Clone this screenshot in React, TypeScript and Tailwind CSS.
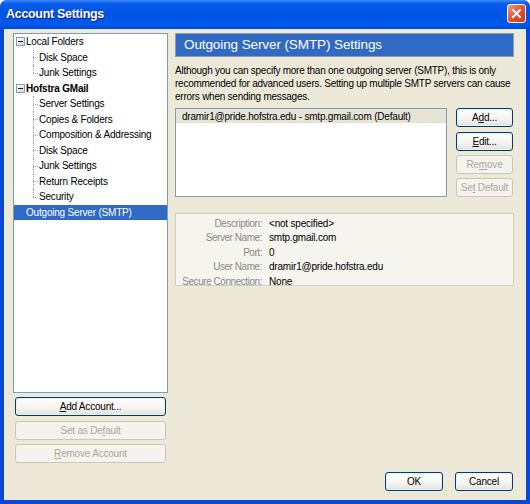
import React from 'react';

const ui = "font-['Liberation_Sans',Arial,sans-serif]";

type BtnProps = {
  children: React.ReactNode;
  disabled?: boolean;
  className?: string;
};

function XpButton({ children, disabled, className = '' }: BtnProps) {
  return (
    <div
      className={`h-[19px] flex items-center justify-center rounded-[3px] border text-[10px] tracking-[-0.2px] ${
        disabled
          ? 'border-[#c9c7ba] text-[#aca899] bg-[#f4f3ee]'
          : 'border-[#003c74] text-black bg-[linear-gradient(to_bottom,#ffffff,#f4f4f0_60%,#e3e1d8)] shadow-[inset_0_0_0_1px_#e8f0fb]'
      } ${className}`}
    >
      {children}
    </div>
  );
}

function Minus() {
  return (
    <div className="ml-[2px] w-[9px] h-[9px] border border-[#7f9db9] bg-[linear-gradient(135deg,#ffffff,#d8d5c8)] flex items-center justify-center">
      <div className="w-[5px] h-[1px] bg-[#1a1a1a]" />
    </div>
  );
}

function Child({ label, last }: { label: string; last?: boolean }) {
  return (
    <div className="h-[15.5px] flex items-center">
      <div className="relative w-[25px] h-full shrink-0">
        <div
          className={`absolute left-[19px] top-0 border-l border-dotted border-[#a0a0a0] ${last ? 'h-1/2' : 'h-full'}`}
        />
        <div className="absolute left-[19px] top-1/2 w-[5px] border-t border-dotted border-[#a0a0a0]" />
      </div>
      <span className="whitespace-nowrap">{label}</span>
    </div>
  );
}

function Root({ label, bold }: { label: string; bold?: boolean }) {
  return (
    <div className="h-[15.5px] flex items-center">
      <Minus />
      <span className={`ml-[1px] whitespace-nowrap ${bold ? 'font-bold' : ''}`}>{label}</span>
    </div>
  );
}

const hofstra = [
  'Server Settings',
  'Copies & Folders',
  'Composition & Addressing',
  'Disk Space',
  'Junk Settings',
  'Return Receipts',
  'Security',
];

const details = [
  ['Description:', '<not specified>'],
  ['Server Name:', 'smtp.gmail.com'],
  ['Port:', '0'],
  ['User Name:', 'dramir1@pride.hofstra.edu'],
  ['Secure Connection:', 'None'],
];

export default function App() {
  return (
    <div className={`w-[530px] h-[504px] bg-white ${ui}`}>
      <div className="h-full flex flex-col rounded-t-[7px] overflow-hidden bg-[#0847d8]">
        {/* title bar */}
        <div className="h-[29px] shrink-0 flex items-center justify-between pl-[6px] pr-[4px] bg-[linear-gradient(to_bottom,#3d8dfc_0%,#0a5ded_12%,#0054e3_45%,#0058ee_85%,#0049d4_100%)]">
          <span className="text-white font-bold text-[12.5px] tracking-[-0.3px] [text-shadow:1px_1px_0_#0a1e7a] -mt-[1px]">
            Account Settings
          </span>
          <div className="w-[19px] h-[19px] -mt-[2px] rounded-[3px] border border-white bg-[linear-gradient(135deg,#f39a7c,#e0532f_50%,#c43b1b)] flex items-center justify-center">
            <svg width="11" height="11" viewBox="0 0 11 11">
              <path d="M2 2 L9 9 M9 2 L2 9" stroke="white" strokeWidth="2" strokeLinecap="square" />
            </svg>
          </div>
        </div>

        {/* body */}
        <div className="flex-1 px-[4px] pb-[4px] flex flex-col">
          <div className="flex-1 bg-[#ece9d8] flex flex-col pl-[9px] pr-[12px] pt-[4px] text-[10px] tracking-[-0.2px] text-black">
            <div className="flex gap-[7px]">
              {/* left column */}
              <div className="w-[155px] shrink-0 flex flex-col">
                <div className="h-[360px] border border-[#7f9db9] bg-white">
                  <Root label="Local Folders" />
                  <Child label="Disk Space" />
                  <Child label="Junk Settings" last />
                  <Root label="Hofstra GMail" bold />
                  {hofstra.map((h, i) => (
                    <Child key={h + i} label={h} last={i === hofstra.length - 1} />
                  ))}
                  <div className="h-[15.5px] flex items-center bg-[#316ac5] text-white pl-[12px]">
                    Outgoing Server (SMTP)
                  </div>
                </div>
                <XpButton className="mt-[4px] mx-[2px]">
                  <span>
                    <u>A</u>dd Account...
                  </span>
                </XpButton>
                <XpButton disabled className="mt-[5px] mx-[2px]">
                  <span>
                    Set as De<u>f</u>ault
                  </span>
                </XpButton>
                <XpButton disabled className="mt-[4px] mx-[2px]">
                  <span>
                    <u>R</u>emove Account
                  </span>
                </XpButton>
              </div>

              {/* right column */}
              <div className="flex-1 flex flex-col">
                <div className="h-[24px] border border-[#8c9bbd] bg-[#316ac5] flex items-center pl-[8px]">
                  <span className="text-white text-[13.5px] tracking-[-0.1px]">Outgoing Server (SMTP) Settings</span>
                </div>
                <p className="mt-[7px] leading-[13px] whitespace-nowrap tracking-[-0.25px]">
                  Although you can specify more than one outgoing server (SMTP), this is only
                  <br />
                  recommended for advanced users. Setting up multiple SMTP servers can cause
                  <br />
                  errors when sending messages.
                </p>
                <div className="mt-[5px] flex gap-[9px]">
                  <div className="w-[272px] h-[89px] border border-[#7f9db9] bg-white">
                    <div className="h-[14px] bg-[#e6e3d7] flex items-center pl-[6px] whitespace-nowrap">
                      dramir1@pride.hofstra.edu - smtp.gmail.com (Default)
                    </div>
                  </div>
                  <div className="w-[57px] flex flex-col">
                    <XpButton>
                      <span>
                        A<u>d</u>d...
                      </span>
                    </XpButton>
                    <XpButton className="mt-[5px]">
                      <span>
                        <u>E</u>dit...
                      </span>
                    </XpButton>
                    <XpButton disabled className="mt-[4px]">
                      <span>
                        Re<u>m</u>ove
                      </span>
                    </XpButton>
                    <XpButton disabled className="mt-[4px]">
                      <span>
                        Se<u>t</u> Default
                      </span>
                    </XpButton>
                  </div>
                </div>
                <div className="mt-[16px] h-[73px] border border-[#d0cebf] bg-[#f5f4ef] pt-[2px] grid grid-cols-[86px_1fr] gap-x-[7px] auto-rows-[14.5px] items-center">
                  {details.map(([k, v]) => (
                    <React.Fragment key={k}>
                      <span className="text-right whitespace-nowrap text-[#8a8a8a] tracking-[-0.45px]">{k}</span>
                      <span className="whitespace-nowrap">{v}</span>
                    </React.Fragment>
                  ))}
                </div>
              </div>
            </div>

            {/* dialog buttons */}
            <div className="mt-[9px] flex justify-end gap-[12px] pr-[1px]">
              <XpButton className="w-[58px]">OK</XpButton>
              <XpButton className="w-[58px]">Cancel</XpButton>
            </div>
          </div>
        </div>
      </div>
    </div>
  );
}
